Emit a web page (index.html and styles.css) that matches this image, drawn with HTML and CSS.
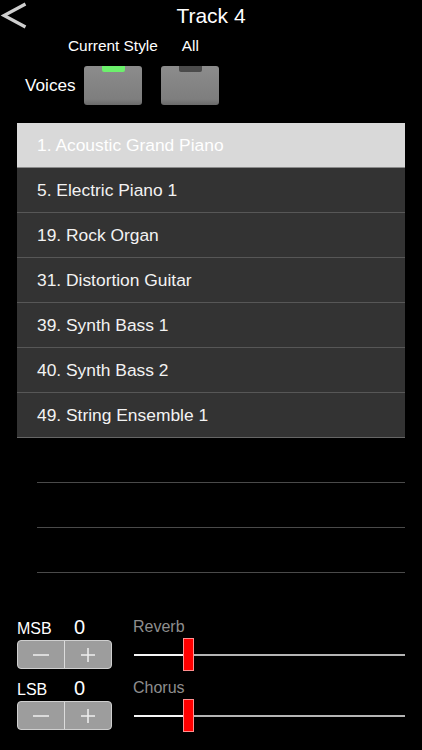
FILE: index.html
```html
<!DOCTYPE html>
<html>
<head>
<meta charset="utf-8">
<link rel="stylesheet" href="styles.css">
</head>
<body>
<div class="screen">
  <header class="header">
    <svg class="back" width="28" height="32" viewBox="0 0 28 32"><polyline points="25.5,4 4,15.5 25.5,27" fill="none" stroke="#cfcfcf" stroke-width="3.2"/></svg>
    <div class="title">Track 4</div>
    <div></div>
  </header>
  <div class="style-row">
    <span>Current Style</span>
    <span>All</span>
  </div>
  <div class="voices-row">
    <span class="voices-label">Voices</span>
    <div class="voice-btn"><span class="ind ind-on"></span></div>
    <div class="voice-btn"><span class="ind ind-off"></span></div>
  </div>
  <ul class="list">
    <li class="row selected">1. Acoustic Grand Piano</li>
    <li class="row">5. Electric Piano 1</li>
    <li class="row">19. Rock Organ</li>
    <li class="row">31. Distortion Guitar</li>
    <li class="row">39. Synth Bass 1</li>
    <li class="row">40. Synth Bass 2</li>
    <li class="row last">49. String Ensemble 1</li>
  </ul>
  <div class="empty">
    <div class="empty-row"></div>
    <div class="empty-row"></div>
    <div class="empty-row"></div>
  </div>
  <div class="controls">
    <div class="ctrl">
      <div class="left">
        <div class="lbl-line"><span class="lbl">MSB</span><span class="val">0</span></div>
        <div class="stepper">
          <div class="step"><svg width="18" height="18" viewBox="0 0 18 18"><line x1="1" y1="9" x2="17" y2="9" stroke="#ececec" stroke-width="1.6"/></svg></div>
          <div class="step plus"><svg width="18" height="18" viewBox="0 0 18 18"><line x1="2" y1="9" x2="16" y2="9" stroke="#ececec" stroke-width="1.6"/><line x1="9" y1="2" x2="9" y2="16" stroke="#ececec" stroke-width="1.6"/></svg></div>
        </div>
      </div>
      <div class="right">
        <div class="slabel">Reverb</div>
        <div class="slider">
          <div class="fill" style="width:18%"></div>
          <div class="thumb"></div>
          <div class="rest"></div>
        </div>
      </div>
    </div>
    <div class="ctrl">
      <div class="left">
        <div class="lbl-line"><span class="lbl">LSB</span><span class="val">0</span></div>
        <div class="stepper">
          <div class="step"><svg width="18" height="18" viewBox="0 0 18 18"><line x1="1" y1="9" x2="17" y2="9" stroke="#ececec" stroke-width="1.6"/></svg></div>
          <div class="step plus"><svg width="18" height="18" viewBox="0 0 18 18"><line x1="2" y1="9" x2="16" y2="9" stroke="#ececec" stroke-width="1.6"/><line x1="9" y1="2" x2="9" y2="16" stroke="#ececec" stroke-width="1.6"/></svg></div>
        </div>
      </div>
      <div class="right">
        <div class="slabel">Chorus</div>
        <div class="slider">
          <div class="fill" style="width:18%"></div>
          <div class="thumb"></div>
          <div class="rest"></div>
        </div>
      </div>
    </div>
  </div>
</div>
</body>
</html>
```
FILE: styles.css
```css
html, body {
  margin: 0;
  padding: 0;
  background: #000;
}
body {
  font-family: "Liberation Sans", Arial, sans-serif;
  color: #fff;
}
.screen {
  width: 422px;
  height: 750px;
  overflow: hidden;
  display: flex;
  flex-direction: column;
}
.header {
  height: 32px;
  display: grid;
  grid-template-columns: 1fr auto 1fr;
  align-items: center;
}
.back {
  display: block;
}
.title {
  font-size: 21px;
  line-height: 32px;
  color: #fff;
}
.style-row {
  height: 28px;
  line-height: 28px;
  font-size: 15.4px;
  padding-left: 68px;
  display: flex;
  gap: 24px;
}
.voices-row {
  margin-top: 6px;
  height: 39px;
  display: flex;
  align-items: center;
  padding-left: 25px;
}
.voices-label {
  font-size: 17.2px;
  width: 59px;
}
.voice-btn {
  width: 58px;
  height: 39px;
  margin-right: 19px;
  box-sizing: border-box;
  border-radius: 3px;
  background: linear-gradient(#8c8c8c, #7e7e7e 85%, #6a6a6a);
  display: flex;
  justify-content: center;
  align-items: flex-start;
}
.ind {
  width: 23px;
  height: 6px;
  border-radius: 0 0 2px 2px;
}
.ind-on {
  background: #6cf06c;
}
.ind-off {
  background: #4b4b4b;
}
.list {
  list-style: none;
  margin: 18px 17px 0 17px;
  padding: 0;
}
.row {
  height: 44px;
  line-height: 45px;
  border-bottom: 1px solid #575757;
  background: #333;
  padding-left: 20px;
  font-size: 17.4px;
  color: #f2f2f2;
}
.row.selected {
  background: #d9d9d9;
  color: #fff;
  border-bottom-color: #8a8a8a;
}
.row.last {
  border-bottom-color: #666;
}
.empty {
  margin-left: 37px;
  margin-right: 17px;
}
.empty-row {
  height: 44px;
  border-bottom: 1px solid #4a4a4a;
}
.controls {
  margin-top: 43px;
  display: flex;
  flex-direction: column;
  gap: 6px;
  padding: 0 17px;
}
.ctrl {
  display: flex;
  gap: 22px;
  height: 55px;
}
.left {
  width: 95px;
  display: flex;
  flex-direction: column;
}
.lbl-line {
  height: 22px;
  line-height: 22px;
  display: flex;
  align-items: baseline;
}
.lbl {
  font-size: 16px;
  width: 57px;
  color: #fff;
}
.val {
  font-size: 20px;
  color: #fff;
}
.stepper {
  margin-top: 2px;
  height: 29px;
  box-sizing: border-box;
  border: 1px solid #cfcfcf;
  border-radius: 4px;
  background: #9d9d9d;
  display: flex;
}
.step {
  flex: 1;
  display: flex;
  align-items: center;
  justify-content: center;
}
.step.plus {
  border-left: 1px solid #dcdcdc;
}
.step svg {
  display: block;
}
.right {
  flex: 1;
  display: flex;
  flex-direction: column;
}
.slabel {
  height: 22px;
  line-height: 22px;
  font-size: 16px;
  color: #8e8e8e;
  margin-left: -1px;
}
.slider {
  height: 33px;
  display: flex;
  align-items: center;
}
.fill {
  height: 2px;
  background: #f4f4f4;
}
.thumb {
  width: 11px;
  height: 33px;
  box-sizing: border-box;
  background: #ff0000;
  border: 1px solid #ff8f8f;
}
.rest {
  flex: 1;
  height: 2px;
  background: #b4b4b4;
}
```
